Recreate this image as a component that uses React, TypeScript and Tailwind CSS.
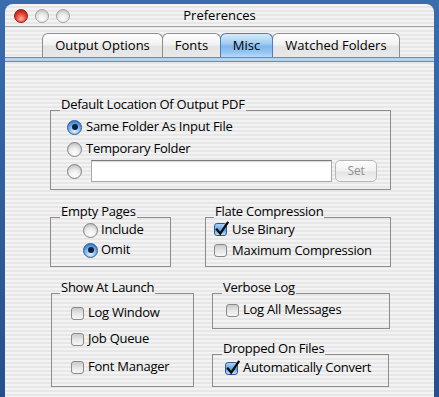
import React from "react";

const stripe =
  "bg-[repeating-linear-gradient(to_bottom,#f3f3f3_0px,#f3f3f3_2px,#e7e7e7_2px,#e7e7e7_4px)] bg-fixed";

function Radio({ on }: { on?: boolean }) {
  return (
    <span
      className={
        "relative flex h-[15px] w-[15px] shrink-0 items-center justify-center rounded-full border " +
        (on
          ? "border-[#34588f] bg-[radial-gradient(circle_at_50%_78%,#e2f2ff_0%,#7ab8f2_45%,#3d7fd2_80%,#2a62b4_100%)]"
          : "border-[#828282] bg-[radial-gradient(circle_at_50%_78%,#ffffff_0%,#ececec_45%,#c4c4c4_80%,#a9a9a9_100%)]")
      }
    >
      {on && <span className="h-[6px] w-[6px] rounded-full bg-[#10203a]" />}
    </span>
  );
}

function Check({ on }: { on?: boolean }) {
  return (
    <span
      className={
        "relative block h-[13px] w-[13px] shrink-0 rounded-[3px] border " +
        (on
          ? "border-[#34588f] bg-[linear-gradient(to_bottom,#a9d2f8_0%,#6aa7ea_50%,#5c9ae3_55%,#c4e2ff_100%)]"
          : "border-[#8a8a8a] bg-[linear-gradient(to_bottom,#c9c9c9_0%,#e6e6e6_50%,#f7f7f7_100%)]")
      }
    >
      {on && (
        <svg
          className="absolute left-[-1px] top-[-4px]"
          width="16"
          height="16"
          viewBox="0 0 16 16"
        >
          <path
            d="M2.2 8.6 L6.2 13.6 L14.2 1.8"
            fill="none"
            stroke="#0b0b0b"
            strokeWidth="2.3"
            strokeLinejoin="miter"
          />
        </svg>
      )}
    </span>
  );
}

function Group({
  label,
  labelLeft,
  className,
  children,
}: {
  label: string;
  labelLeft: string;
  className: string;
  children?: React.ReactNode;
}) {
  return (
    <div className={"relative shrink-0 border border-[#8c8c8c] " + className}>
      <span
        className={
          "absolute top-[-15px] h-[16px] px-[1px] leading-[16px] whitespace-nowrap " +
          stripe +
          " " +
          labelLeft
        }
      >
        {label}
      </span>
      {children}
    </div>
  );
}

function Tab({
  label,
  w,
  active,
}: {
  label: string;
  w: string;
  active?: boolean;
}) {
  return (
    <div
      className={
        "-ml-px flex h-[24px] items-center justify-center rounded-t-[6px] border border-b-0 pt-[1px] tracking-normal " +
        w +
        " " +
        (active
          ? "z-10 border-[#4d7dbd] bg-[linear-gradient(to_bottom,#d6ebfd_0%,#a3cdf4_40%,#7eb6ec_55%,#95c6f3_80%,#b6dafb_100%)]"
          : "border-[#8e8e8e] bg-[linear-gradient(to_bottom,#fefefe_0%,#f2f2f2_45%,#e3e3e3_55%,#e9e9e9_100%)]")
      }
    >
      {label}
    </div>
  );
}

export default function App() {
  return (
    <div className="h-[397px] w-[439px] overflow-hidden bg-[linear-gradient(to_bottom,#3a6cae,#25508d)] px-[5px] pt-[4px] font-['Open_Sans',sans-serif] text-[13px] tracking-[-0.25px] text-black">
      <div className={"flex h-[393px] w-[429px] flex-col rounded-t-[8px] " + stripe}>
        {/* title bar */}
        <div className="grid h-[23px] shrink-0 grid-cols-[1fr_auto_1fr] items-center border-b border-[#a2a2a2]">
          <div className="flex items-center gap-[7px] pl-[9px] pt-[1px]">
            <span className="h-[14px] w-[14px] rounded-full border border-[#8c1d16] bg-[radial-gradient(circle_at_50%_72%,#ffb2a4_0%,#e8483c_45%,#c82219_75%,#8f130e_100%)]" />
            <span className="h-[14px] w-[14px] rounded-full border border-[#a3a3a3] bg-[radial-gradient(circle_at_50%_72%,#ffffff_0%,#e6e6e6_50%,#c6c6c6_80%,#b0b0b0_100%)]" />
            <span className="h-[14px] w-[14px] rounded-full border border-[#a3a3a3] bg-[radial-gradient(circle_at_50%_72%,#ffffff_0%,#e6e6e6_50%,#c6c6c6_80%,#b0b0b0_100%)]" />
          </div>
          <div className="pt-[1px] tracking-normal">Preferences</div>
          <div />
        </div>

        {/* tabs */}
        <div className="mt-[6px] flex shrink-0 pl-[38px]">
          <Tab label="Output Options" w="w-[121px]" />
          <Tab label="Fonts" w="w-[59px]" />
          <Tab label="Misc" w="w-[53px]" active />
          <Tab label="Watched Folders" w="w-[128px]" />
        </div>
        <div className="h-[5px] shrink-0 border-y border-[#5e8cca] bg-[#b5d2f3]" />

        {/* content */}
        <div className="flex flex-1 flex-col">
          <Group
            label="Default Location Of Output PDF"
            labelLeft="left-[9px]"
            className="ml-[45px] mt-[48px] h-[80px] w-[341px]"
          >
            <div className="flex flex-col pl-[16px] pt-[6px]">
              <div className="flex h-[20px] items-center gap-[4px]">
                <Radio on />
                <span>Same Folder As Input File</span>
              </div>
              <div className="mt-[2px] flex h-[20px] items-center gap-[4px]">
                <Radio />
                <span>Temporary Folder</span>
              </div>
              <div className="mt-[1px] flex h-[22px] items-center">
                <Radio />
                <div className="ml-[9px] h-[22px] w-[241px] border border-[#a9a9a9] border-t-[#7b7b7b] bg-white shadow-[inset_0_1px_1px_rgba(0,0,0,0.15)]" />
                <div className="ml-[3px] flex h-[22px] w-[42px] items-center justify-center rounded-[5px] border border-[#b8b8b8] bg-[linear-gradient(to_bottom,#fdfdfd_0%,#f1f1f1_50%,#e4e4e4_55%,#f4f4f4_100%)] text-[12px] text-[#8e8e8e]">
                  Set
                </div>
              </div>
            </div>
          </Group>

          <div className="mt-[27px] flex">
            <Group
              label="Empty Pages"
              labelLeft="left-[9px]"
              className="ml-[45px] h-[50px] w-[121px]"
            >
              <div className="flex flex-col pl-[32px] pt-[2px]">
                <div className="flex h-[20px] items-center gap-[3px]">
                  <Radio />
                  <span>Include</span>
                </div>
                <div className="flex h-[20px] items-center gap-[3px]">
                  <Radio on />
                  <span>Omit</span>
                </div>
              </div>
            </Group>
            <Group
              label="Flate Compression"
              labelLeft="left-[8px]"
              className="ml-[34px] h-[50px] w-[186px]"
            >
              <div className="flex flex-col pl-[8px] pt-[1px]">
                <div className="flex h-[21px] items-center gap-[5px]">
                  <Check on />
                  <span>Use Binary</span>
                </div>
                <div className="flex h-[21px] items-center gap-[5px]">
                  <Check />
                  <span>Maximum Compression</span>
                </div>
              </div>
            </Group>
          </div>

          <div className="mt-[26px] flex">
            <Group
              label="Show At Launch"
              labelLeft="left-[8px]"
              className="ml-[46px] h-[94px] w-[143px]"
            >
              <div className="flex flex-col pl-[19px] pt-[6px]">
                <div className="flex h-[26px] items-center gap-[4px]">
                  <Check />
                  <span>Log Window</span>
                </div>
                <div className="flex h-[26px] items-center gap-[4px]">
                  <Check />
                  <span>Job Queue</span>
                </div>
                <div className="mt-[2px] flex h-[26px] items-center gap-[4px]">
                  <Check />
                  <span>Font Manager</span>
                </div>
              </div>
            </Group>
            <div className="ml-[18px] flex flex-col">
              <Group
                label="Verbose Log"
                labelLeft="left-[9px]"
                className="h-[36px] w-[178px]"
              >
                <div className="flex h-[32px] items-center gap-[4px] pl-[13px]">
                  <Check />
                  <span>Log All Messages</span>
                </div>
              </Group>
              <Group
                label="Dropped On Files"
                labelLeft="left-[9px]"
                className="mt-[25px] h-[33px] w-[177px]"
              >
                <div className="flex h-[26px] items-center gap-[5px] pl-[12px]">
                  <Check on />
                  <span>Automatically Convert</span>
                </div>
              </Group>
            </div>
          </div>
        </div>
      </div>
    </div>
  );
}
